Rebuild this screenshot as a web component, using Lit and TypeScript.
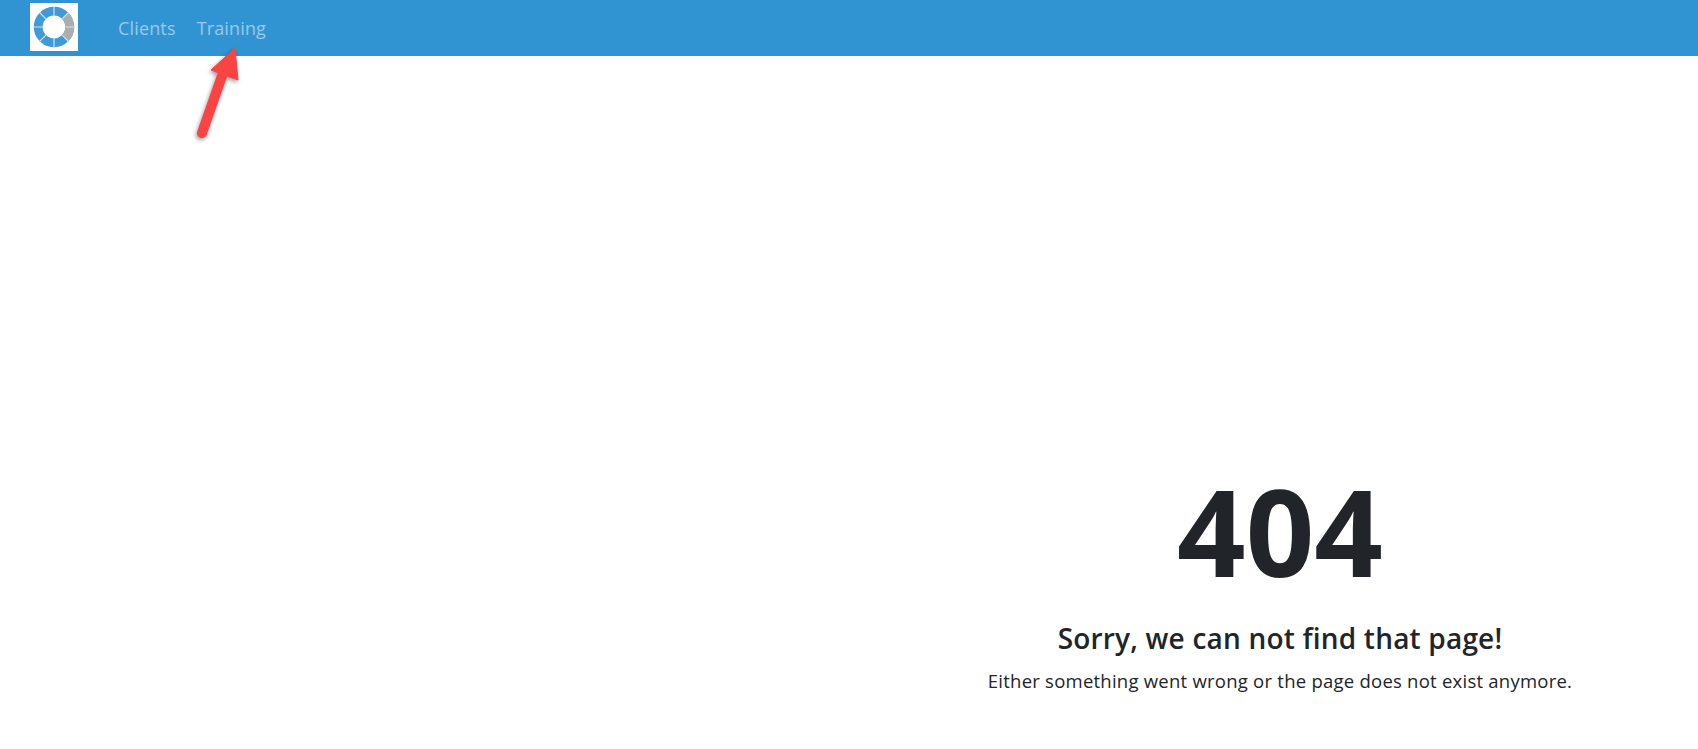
import { LitElement, html, css } from 'lit';
import { customElement } from 'lit/decorators.js';

@customElement('app-root')
export class AppRoot extends LitElement {
  static styles = css`
    :host {
      display: block;
      height: 749px;
      position: relative;
      overflow: hidden;
      background: #fff;
      color: #212529;
      font-family: 'Open Sans', 'Noto Sans', sans-serif;
    }

    .navbar {
      display: flex;
      align-items: center;
      height: 56px;
      padding: 0 30px;
      background: #3194d2;
    }

    .brand {
      display: block;
      width: 48px;
      height: 48px;
      margin: 0 40px 2px 0;
    }

    .nav-link {
      margin: 0 21px 0 0;
      font-size: 18px;
      letter-spacing: 0.15px;
      color: rgba(255, 255, 255, 0.5);
    }

    .content {
      display: grid;
      grid-template-columns: 1fr 640px;
      padding: 0 98px 0 0;
    }

    .message {
      grid-column: 2;
      display: flex;
      flex-direction: column;
      align-items: center;
      padding-top: 400px;
    }

    .code {
      font-size: 120px;
      line-height: 150px;
      font-weight: 700;
    }

    .title {
      margin-top: 13px;
      font-size: 28px;
      line-height: 38px;
      font-weight: 600;
      letter-spacing: 0.2px;
    }

    .text {
      margin-top: 11px;
      font-size: 18.5px;
      line-height: 26px;
      letter-spacing: 0.24px;
    }

    .arrow {
      position: absolute;
      left: 190px;
      top: 44px;
      filter: drop-shadow(-1px 2px 2px rgba(0, 0, 0, 0.4));
    }
  `;

  render() {
    return html`
      <nav class="navbar">
        <svg class="brand" viewBox="0 0 48 48">
          <rect width="48" height="48" fill="#fff" />
          <circle cx="24" cy="24" r="15.8" fill="none" stroke="#3f9ad6" stroke-width="8.8" />
          <path d="M35.17 12.83A15.8 15.8 0 0 1 35.17 35.17" fill="none" stroke="#adadad" stroke-width="8.8" />
          <g stroke="#cfe3f1" stroke-width="1.2">
            <path d="M24 3.5v9M24 35.5v9M3.5 24h9M35.5 24h9M9.5 9.5l6.4 6.4M38.5 9.5l-6.4 6.4M9.5 38.5l6.4-6.4M38.5 38.5l-6.4-6.4" />
          </g>
        </svg>
        <a class="nav-link">Clients</a>
        <a class="nav-link">Training</a>
      </nav>
      <main class="content">
        <section class="message">
          <div class="code">404</div>
          <div class="title">Sorry, we can not find that page!</div>
          <div class="text">Either something went wrong or the page does not exist anymore.</div>
        </section>
      </main>
      <svg class="arrow" width="60" height="100" viewBox="0 0 60 100">
        <path d="M12 89L32 32" stroke="#fa4444" stroke-width="10" stroke-linecap="round" fill="none" />
        <path d="M45 4L48 36L21 26Z" fill="#fa4444" stroke="#fa4444" stroke-linejoin="round" />
      </svg>
    `;
  }
}
